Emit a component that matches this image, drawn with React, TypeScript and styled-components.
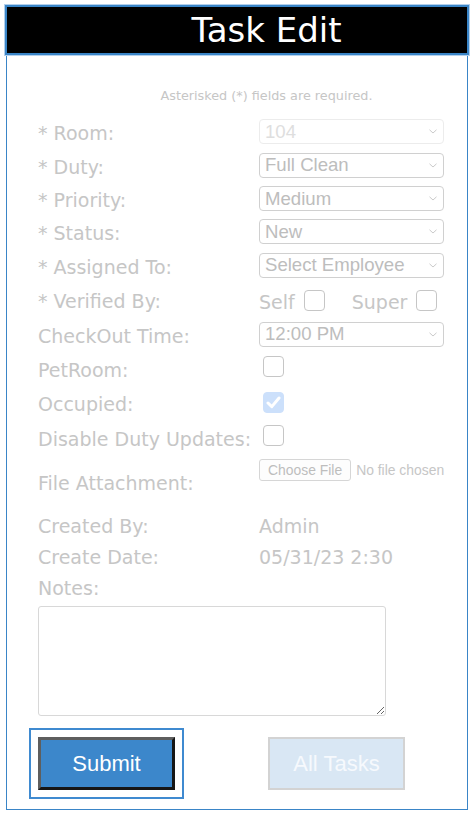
import React from 'react';
import styled, { createGlobalStyle } from 'styled-components';

const Global = createGlobalStyle`
  html, body { margin: 0; padding: 0; background: #fff; }
  body { padding: 6px 0 0 6px; font-family: "DejaVu Sans", Verdana, sans-serif; }
  * { box-sizing: border-box; }
`;

const Frame = styled.div`
  width: 462px;
  height: 804px;
  border: 1px solid #3a85c7;
  display: flex;
  flex-direction: column;
`;

const Header = styled.h1`
  margin: -2px -2px 0 -2px;
  height: 50px;
  background: #000;
  border: 2px solid #3a85c7;
  box-shadow: 0 0 0 1px #b3d0ec;
  color: #fff;
  font: 400 34px/46px "DejaVu Sans", Verdana, sans-serif;
  text-align: center;
  padding-left: 59px;
`;

const Note = styled.p`
  margin: 33px 0 0 0;
  padding-left: 59px;
  text-align: center;
  font-size: 12.8px;
  line-height: 15px;
  color: #c6c6c6;
`;

const Form = styled.div`
  padding: 12px 0 0 31px;
  display: flex;
  flex-direction: column;
`;

const Row = styled.div<{ $h: number; $top?: boolean }>`
  display: grid;
  grid-template-columns: 221px 185px;
  height: ${p => p.$h}px;
  align-items: ${p => (p.$top ? 'start' : 'center')};
`;

const Label = styled.div<{ $mt?: number }>`
  font-size: 19px;
  line-height: 22px;
  padding-top: 3px;
  color: #c6c6c6;
  white-space: nowrap;
  margin-top: ${p => p.$mt ?? 0}px;
`;

const Value = styled(Label)``;

const SelectBox = styled.div<{ $disabled?: boolean }>`
  height: 25px;
  border: 1px solid ${p => (p.$disabled ? '#ececec' : '#d0d0d0')};
  border-radius: 4px;
  display: flex;
  align-items: center;
  justify-content: space-between;
  padding: 0 6px 0 5px;
  font: 18.6px "Liberation Sans", Arial, sans-serif;
  color: ${p => (p.$disabled ? '#dedede' : '#bdbdbd')};
  background: #fff;
`;

const Chevron = () => (
  <svg width="8" height="5" viewBox="0 0 8 5" fill="none">
    <path d="M0.5 0.8 L4 4 L7.5 0.8" stroke="#c4c4c4" strokeWidth="0.9" />
  </svg>
);

const Select = ({ value, disabled }: { value: string; disabled?: boolean }) => (
  <SelectBox $disabled={disabled}>
    <span>{value}</span>
    <Chevron />
  </SelectBox>
);

const Box = styled.span<{ $checked?: boolean; $ml?: number }>`
  display: inline-flex;
  align-items: center;
  justify-content: center;
  width: 21px;
  height: 21px;
  margin-left: ${p => p.$ml ?? 0}px;
  border-radius: 4px;
  border: 1px solid ${p => (p.$checked ? '#cce0fb' : '#c6c6c6')};
  background: ${p => (p.$checked ? '#cce0fb' : '#fff')};
`;

const Check = () => (
  <svg width="15" height="13" viewBox="0 0 15 13" fill="none">
    <path d="M2 7 L5.8 10.6 L13 2" stroke="#fff" strokeWidth="3" strokeLinecap="round" strokeLinejoin="round" />
  </svg>
);

const Checkbox = ({ checked, ml }: { checked?: boolean; ml?: number }) => (
  <Box $checked={checked} $ml={ml}>{checked && <Check />}</Box>
);

const Verify = styled.div`
  display: flex;
  align-items: flex-end;
  height: 24px;
`;

const VerifyText = styled.span<{ $ml?: number }>`
  font-size: 19px;
  line-height: 22px;
  color: #c6c6c6;
  margin: 0 9px -2px ${p => p.$ml ?? 0}px;
`;

const FileWrap = styled.div`
  display: flex;
  align-items: center;
  margin-top: 5px;
  font: 13.9px "Liberation Sans", Arial, sans-serif;
`;

const FileButton = styled.span`
  height: 22px;
  display: inline-flex;
  align-items: center;
  padding: 0 8px;
  border: 1px solid #d6d6d6;
  border-radius: 3px;
  background: #fdfdfd;
  color: #bdbdbd;
  white-space: nowrap;
`;

const FileText = styled.span`
  margin-left: 5px;
  color: #c6c6c6;
  white-space: nowrap;
`;

const Notes = styled.textarea`
  margin-top: 4px;
  width: 348px;
  height: 110px;
  border: 1px solid #d8d8d8;
  border-radius: 3px;
  background: #fff;
  outline: none;
`;

const Buttons = styled.div`
  display: flex;
  gap: 93px;
  margin-top: 21px;
`;

const Btn = styled.button<{ $primary?: boolean }>`
  width: 137px;
  height: 53px;
  font: 22px "Liberation Sans", Arial, sans-serif;
  border-style: solid;
  border-width: ${p => (p.$primary ? '3px' : '2px')};
  border-color: ${p => (p.$primary ? '#5e5e5e #161616 #161616 #5e5e5e' : '#d3d3d3')};
  background: ${p => (p.$primary ? '#3c87cb' : '#d9e7f4')};
  color: ${p => (p.$primary ? '#fff' : '#f6f9fd')};
  outline: ${p => (p.$primary ? '2px solid #3f8ad0' : 'none')};
  outline-offset: 7px;
  padding: 0;
`;

export default function App() {
  return (
    <>
      <Global />
      <Frame>
        <Header>Task Edit</Header>
        <Note>Asterisked (*) fields are required.</Note>
        <Form>
          <Row $h={33}><Label>* Room:</Label><Select value="104" disabled /></Row>
          <Row $h={34}><Label>* Duty:</Label><Select value="Full Clean" /></Row>
          <Row $h={33}><Label>* Priority:</Label><Select value="Medium" /></Row>
          <Row $h={33}><Label>* Status:</Label><Select value="New" /></Row>
          <Row $h={34}><Label>* Assigned To:</Label><Select value="Select Employee" /></Row>
          <Row $h={34}>
            <Label>* Verified By:</Label>
            <Verify>
              <VerifyText>Self</VerifyText>
              <Checkbox />
              <VerifyText $ml={27}>Super</VerifyText>
              <Checkbox />
            </Verify>
          </Row>
          <Row $h={36}><Label>CheckOut Time:</Label><Select value="12:00 PM" /></Row>
          <Row $h={32}><Label>PetRoom:</Label><div><Checkbox ml={4} /></div></Row>
          <Row $h={36}><Label>Occupied:</Label><div><Checkbox checked ml={4} /></div></Row>
          <Row $h={34}><Label>Disable Duty Updates:</Label><div><Checkbox ml={4} /></div></Row>
          <Row $h={54} $top>
            <Label $mt={15}>File Attachment:</Label>
            <FileWrap>
              <FileButton>Choose File</FileButton>
              <FileText>No file chosen</FileText>
            </FileWrap>
          </Row>
          <Row $h={32}><Label>Created By:</Label><Value>Admin</Value></Row>
          <Row $h={30}><Label>Create Date:</Label><Value>05/31/23 2:30</Value></Row>
          <Row $h={32}><Label>Notes:</Label></Row>
          <Notes />
          <Buttons>
            <Btn $primary>Submit</Btn>
            <Btn>All Tasks</Btn>
          </Buttons>
        </Form>
      </Frame>
    </>
  );
}
